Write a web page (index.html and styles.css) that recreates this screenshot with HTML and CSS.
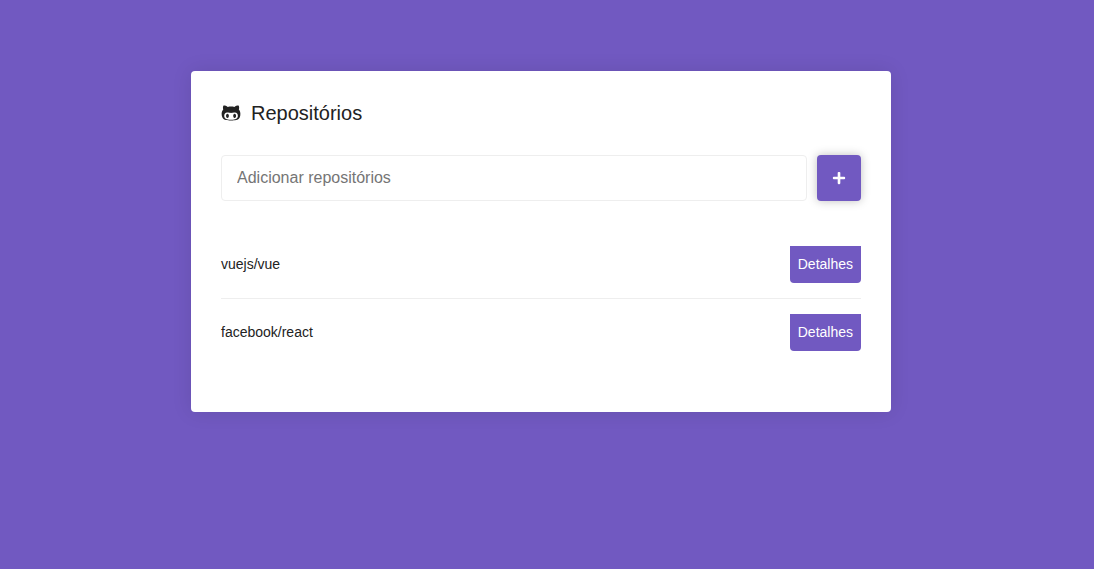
FILE: index.html
```html
<!DOCTYPE html>
<html lang="pt-BR">
<head>
<meta charset="utf-8">
<meta name="viewport" content="width=device-width, initial-scale=1">
<title>Repositórios</title>
<link rel="stylesheet" href="styles.css">
</head>
<body>
<main class="container">
  <h1 class="title">
    <svg class="title-icon" viewBox="0 0 480 512" fill="currentColor" aria-hidden="true"><path d="M186.1 328.7c0 20.9-10.9 55.1-36.7 55.1s-36.7-34.2-36.7-55.1 10.9-55.1 36.7-55.1 36.7 34.2 36.7 55.1zM480 278.2c0 31.9-3.2 65.7-17.5 95-37.9 76.6-142.1 74.8-216.7 74.8-75.8 0-186.2 2.7-225.6-74.8-14.6-29-20.2-63.1-20.2-95 0-41.9 13.9-81.5 41.5-113.6-5.2-15.8-7.7-32.4-7.7-48.8 0-21.5 4.9-32.3 14.6-51.8 45.3 0 74.3 9 108.8 36 29-6.9 58.8-10 88.7-10 27 0 54.2 2.9 80.4 9.2 34-26.7 63-35.2 107.8-35.2 9.8 19.5 14.6 30.3 14.6 51.8 0 16.4-2.6 32.7-7.7 48.2 27.5 32.4 39 72.3 39 114.2zm-64.3 50.5c0-43.9-26.7-82.6-73.5-82.6-18.9 0-37 3.4-56 6-14.9 2.3-29.8 3.2-45.1 3.2-15.2 0-30.1-.9-45.1-3.2-18.7-2.6-37-6-56-6-46.8 0-73.5 38.7-73.5 82.6 0 87.8 80.4 101.3 150.4 101.3h48.2c70.3 0 150.6-13.4 150.6-101.3zm-82.6-55.1c-25.8 0-36.7 34.2-36.7 55.1s10.9 55.1 36.7 55.1 36.7-34.2 36.7-55.1-10.9-55.1-36.7-55.1z"/></svg>
    Repositórios
  </h1>
  <form class="form">
    <input class="form-input" type="text" placeholder="Adicionar repositórios" aria-label="Adicionar repositórios">
    <button class="form-button" type="submit" aria-label="Adicionar">
      <svg class="plus-icon" viewBox="0 0 448 512" fill="currentColor" aria-hidden="true"><path d="M416 208H272V64c0-17.67-14.33-32-32-32h-32c-17.67 0-32 14.33-32 32v144H32c-17.67 0-32 14.33-32 32v32c0 17.67 14.33 32 32 32h144v144c0 17.67 14.33 32 32 32h32c17.67 0 32-14.33 32-32V304h144c17.67 0 32-14.33 32-32v-32c0-17.67-14.33-32-32-32z"/></svg>
    </button>
  </form>
  <ul class="list">
    <li class="item"><span>vuejs/vue</span><a class="details" href="#vue">Detalhes</a></li>
    <li class="item"><span>facebook/react</span><a class="details" href="#react">Detalhes</a></li>
  </ul>
</main>
</body>
</html>
```
FILE: styles.css
```css
* {
  box-sizing: border-box;
  margin: 0;
  padding: 0;
}

body {
  min-height: 100vh;
  padding: 71px 12px 40px 0;
  background: #7159c1;
  color: #222;
  font: 14px/16px "Liberation Sans", Arial, sans-serif;
}

.container {
  max-width: 700px;
  margin: 0 auto;
  padding: 30px;
  background: #fff;
  border-radius: 4px;
  box-shadow: 0 0 20px rgba(0, 0, 0, 0.1);
}

.title {
  display: flex;
  align-items: center;
  gap: 10px;
  font-size: 20px;
  font-weight: 400;
  line-height: 24px;
}

.title-icon {
  width: 20px;
  height: 20px;
}

.form {
  display: flex;
  gap: 10px;
  margin-top: 30px;
}

.form-input {
  flex: 1;
  min-width: 0;
  height: 46px;
  padding: 10px 15px;
  border: 1px solid #eee;
  border-radius: 4px;
  color: #222;
  font: inherit;
  font-size: 16px;
}

.form-input::placeholder {
  color: #757575;
}

.form-button {
  display: flex;
  align-items: center;
  justify-content: center;
  padding: 0 15px;
  border: 0;
  border-radius: 4px;
  background: #7159c1;
  color: #fff;
  box-shadow: 0 0 10px rgba(0, 0, 0, 0.25);
}

.plus-icon {
  width: 14px;
  height: 14px;
}

.list {
  margin: 30px 0 16px;
  list-style: none;
}

.item {
  display: flex;
  align-items: baseline;
  justify-content: space-between;
  padding: 15px 0;
}

.item + .item {
  border-top: 1px solid #eee;
}

.details {
  padding: 10px 8px 11px;
  border-radius: 0 0 4px 4px;
  background: #7159c1;
  color: #fff;
  text-decoration: none;
}
```
